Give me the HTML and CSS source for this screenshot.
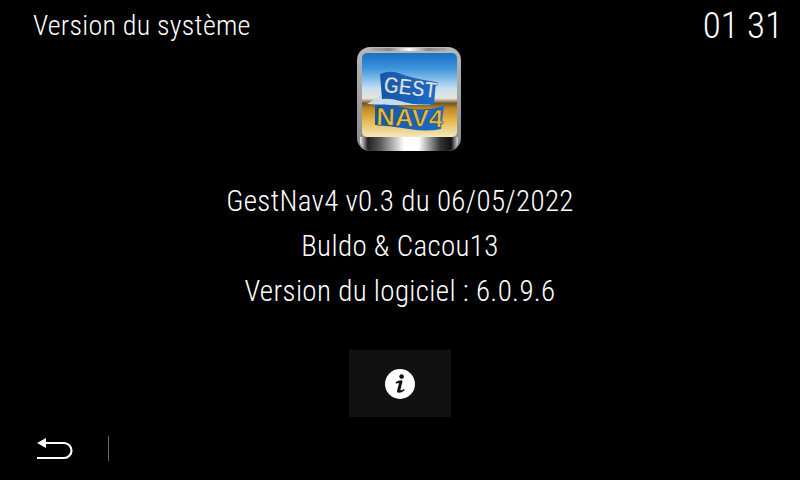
FILE: index.html
```html
<!DOCTYPE html>
<html lang="fr">
<head>
<meta charset="utf-8">
<title>Version du système</title>
<link rel="stylesheet" href="styles.css">
</head>
<body>
<div class="screen">
  <header class="top">
    <span class="title">Version du système</span>
    <span class="clock">01 31</span>
  </header>
  <main class="content">
    <svg class="logo" width="104" height="104" viewBox="0 0 104 104" role="img" aria-label="GestNav4">
      <defs>
        <linearGradient id="frame" x1="0" y1="0" x2="0" y2="1">
          <stop offset="0" stop-color="#b8b8b8"/><stop offset="1" stop-color="#8a8a8a"/>
        </linearGradient>
        <linearGradient id="topline" x1="0" y1="0" x2="1" y2="0">
          <stop offset="0" stop-color="#aaa"/><stop offset=".25" stop-color="#888"/><stop offset=".5" stop-color="#fff"/><stop offset=".75" stop-color="#888"/><stop offset="1" stop-color="#aaa"/>
        </linearGradient>
        <linearGradient id="chrome" x1="0" y1="0" x2="1" y2="0">
          <stop offset="0" stop-color="#eee"/><stop offset=".08" stop-color="#222"/><stop offset=".2" stop-color="#555"/>
          <stop offset=".45" stop-color="#fff"/><stop offset=".6" stop-color="#fff"/><stop offset=".82" stop-color="#333"/>
          <stop offset=".93" stop-color="#111"/><stop offset="1" stop-color="#ddd"/>
        </linearGradient>
        <linearGradient id="scene" x1="0" y1="0" x2="0" y2="1">
          <stop offset="0" stop-color="#1a70c4"/><stop offset=".18" stop-color="#3a94dc"/>
          <stop offset=".42" stop-color="#c4e0f0"/><stop offset=".54" stop-color="#e8e4d8"/>
          <stop offset=".6" stop-color="#6b5530"/><stop offset=".66" stop-color="#c08a20"/>
          <stop offset=".82" stop-color="#e8bc52"/><stop offset="1" stop-color="#f2e8c0"/>
        </linearGradient>
        <linearGradient id="flag" x1="0" y1="0" x2="1" y2="0">
          <stop offset="0" stop-color="#1856a4"/><stop offset="1" stop-color="#1a6ccc"/>
        </linearGradient>
      </defs>
      <rect width="104" height="104" rx="13" fill="url(#frame)"/>
      <rect x="14" y="1" width="76" height="3" fill="url(#topline)"/>
      <path d="M3 90h98v3q0 11-12 11H15q-12 0-12-11z" fill="url(#chrome)"/>
      <rect x="5" y="6" width="95" height="84" rx="5" fill="url(#scene)"/>
      <path d="M10 57l14-9 5-1 44 4v7H28z" fill="#c6dcea"/>
      <path d="M23 27q10-4 18-1 16 6 38 9l-2 22q-18 2-34-3-10-3-18-2z" fill="url(#flag)"/>
      <path d="M18 58q16-2 32 3 14 4 37-2l-3 23q-14 3-32 0-18-3-34-4z" fill="url(#flag)"/>
      <text class="logo-gest" x="26" y="45" textLength="53" lengthAdjust="spacingAndGlyphs" transform="rotate(7 26 45)">GEST</text>
      <text class="logo-nav" x="19" y="78" textLength="67" lengthAdjust="spacingAndGlyphs" transform="rotate(2 19 78)">NAV4</text>
    </svg>
    <div class="info">
      <p>GestNav4 v0.3 du 06/05/2022</p>
      <p>Buldo &amp; Cacou13</p>
      <p>Version du logiciel : 6.0.9.6</p>
    </div>
    <button class="info-btn" type="button" aria-label="Informations">
      <svg width="30" height="30" viewBox="0 0 30 30">
        <circle cx="15" cy="15" r="15" fill="#fff"/>
        <circle cx="16.600" cy="7.600" r="2.300" fill="#111"/>
        <path d="M10.600 13.200q2.600-1.900 5.800-1.900 1.400 0 1 1.700l-1.900 7.300q-.2 1 .6 1 1.200 0 3-1.300l.6 1.200q-2.900 2.600-5.900 2.600-2.200 0-1.700-2.200l1.800-6.800q.2-.9-.6-.9-.9 0-2.300.9z" fill="#111"/>
      </svg>
    </button>
  </main>
  <footer class="bottom">
    <svg width="36" height="22" viewBox="0 0 36 22" fill="none">
      <path d="M8 5H27a7.500 7.500 0 0 1 0 15H0" stroke="#fff" stroke-width="2.200"/>
      <path d="M0 5L9 0V10z" fill="#fff"/>
    </svg>
    <span class="divider"></span>
  </footer>
</div>
</body>
</html>
```
FILE: styles.css
```css
* { box-sizing: border-box; }
html, body { margin: 0; padding: 0; background: #000; }
.screen {
  width: 800px;
  height: 480px;
  display: flex;
  flex-direction: column;
  background: #000;
  color: #fff;
  font-family: "Roboto", sans-serif;
  font-weight: 300;
  font-stretch: 87%;
  overflow: hidden;
}
.top {
  height: 47px;
  padding: 4px 17px 0 33px;
  display: flex;
  justify-content: space-between;
  align-items: center;
}
.title { font-size: 28px; letter-spacing: .25px; }
.clock { font-size: 37px; }
.content {
  flex: 1;
  display: flex;
  flex-direction: column;
  align-items: center;
}
.logo { display: block; margin-left: 18px; }
.logo-gest, .logo-nav {
  font-family: "Liberation Sans", sans-serif;
  font-weight: 700;
  font-size: 23px;
  stroke: #0b3c78;
  stroke-width: .5px;
}
.logo-gest { fill: #d3e3f0; }
.logo-nav { fill: #edb92e; font-size: 25px; }
.info { margin-top: 28px; text-align: center; font-size: 29px; letter-spacing: .35px; }
.info p { margin: 0; height: 45px; line-height: 45px; }
.info-btn {
  margin-top: 36px;
  width: 102px;
  height: 67px;
  padding: 0;
  border: 0;
  background: #111;
  display: flex;
  align-items: center;
  justify-content: center;
}
.bottom {
  height: 63px;
  padding: 0 0 0 37px;
  display: flex;
  align-items: center;
  gap: 35px;
}
.divider { width: 1px; height: 25px; background: #667; }
```
